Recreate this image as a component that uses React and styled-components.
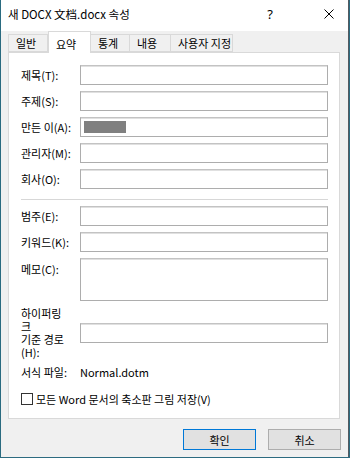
import React from "react"
import styled, { createGlobalStyle } from "styled-components"

const Global = createGlobalStyle`
  html, body {
    margin: 0;
    padding: 0;
    background: #2c6b80;
  }
  body {
    font-family: "Noto Sans CJK KR", "Noto Sans", sans-serif;
    font-size: 11px;
    color: #000;
  }
`

const Window = styled.div`
  box-sizing: border-box;
  width: 349px;
  height: 457px;
  background: #f0f0f0;
  border-left: 1px solid #2a6b80;
  border-right: 1px solid #555a60;
  display: flex;
  flex-direction: column;
`
const TitleBar = styled.div`
  height: 31px;
  flex: 0 0 31px;
  background: #fff;
  display: flex;
  align-items: center;
  padding-left: 7px;
  padding-bottom: 4px;
  box-sizing: border-box;
`
const Title = styled.div`
  flex: 1;
  font-size: 11.5px;
  white-space: nowrap;
`
const Help = styled.div`
  width: 20px;
  text-align: center;
  font-family: "Noto Sans", sans-serif;
  font-size: 13px;
  margin-right: 26px;
`
const Close = styled.div`
  width: 46px;
  display: flex;
  justify-content: center;
  align-items: center;
  margin-right: -4px;
`
const TabStrip = styled.div`
  display: flex;
  align-items: flex-end;
  height: 21px;
  padding-left: 7px;
  position: relative;
  z-index: 1;
`
const Tab = styled.div`
  box-sizing: border-box;
  width: ${p => p.w}px;
  height: ${p => (p.active ? 22 : 18)}px;
  margin-bottom: ${p => (p.active ? -1 : 0)}px;
  background: ${p => (p.active ? "#fff" : "#f0f0f0")};
  border: 1px solid #d9d9d9;
  border-bottom: ${p => (p.active ? "none" : "1px solid #d9d9d9")};
  border-left-width: ${p => (p.first || p.active ? 1 : 0)}px;
  padding-left: 7px;
  padding-top: ${p => (p.active ? 2 : 0)}px;
  display: flex;
  align-items: center;
  white-space: nowrap;
  font-size: 11px;
`
const Panel = styled.div`
  box-sizing: border-box;
  margin: 0 8px 0 7px;
  height: 367px;
  background: #fff;
  border: 1px solid #d9d9d9;
  padding: 12px 11px 0 12px;
  display: flex;
  flex-direction: column;
`
const Row = styled.div`
  display: flex;
  align-items: ${p => (p.top ? "flex-start" : "center")};
  margin-top: ${p => p.mt || 0}px;
  min-height: 20px;
`
const Label = styled.div`
  flex: 0 0 59px;
  white-space: nowrap;
  line-height: ${p => (p.multi ? "13px" : "normal")};
  padding-top: ${p => (p.top ? 3 : 0)}px;
`
const Field = styled.div`
  box-sizing: border-box;
  flex: 1;
  height: ${p => p.h || 20}px;
  background: #fff;
  border: 1px solid #adadad;
  border-top-color: #c3c3c3;
  box-shadow: inset 0 1px 0 #e0e0e0;
  display: flex;
  align-items: center;
  padding-left: 3px;
`
const Redacted = styled.span`
  display: block;
  width: 42px;
  height: 12px;
  background: #808080;
`
const Separator = styled.div`
  height: 1px;
  background: #d7d7d7;
  margin-top: 10px;
`
const Value = styled.div`
  font-size: 11px;
`
const Check = styled.span`
  box-sizing: border-box;
  width: 12px;
  height: 12px;
  border: 1px solid #333;
  background: #fff;
  margin-right: 3px;
  flex: 0 0 12px;
`
const Buttons = styled.div`
  display: flex;
  justify-content: flex-end;
  gap: 12px;
  padding: 10px 7px 0 0;
`
const Button = styled.div`
  box-sizing: border-box;
  width: 73px;
  height: 21px;
  background: #e1e1e1;
  border: 1px solid ${p => (p.primary ? "#0078d7" : "#adadad")};
  display: flex;
  align-items: center;
  justify-content: center;
  font-size: 11px;
`

const fields = [
  { label: "제목(T):" },
  { label: "주제(S):" },
  { label: "만든 이(A):", redacted: true },
  { label: "관리자(M):" },
  { label: "회사(O):" },
]

const tabs = [
  { name: "일반", w: 40, first: true },
  { name: "요약", w: 43, active: true },
  { name: "통계", w: 39 },
  { name: "내용", w: 41 },
  { name: "사용자 지정", w: 62 },
]

export default function App() {
  return (
    <>
      <Global />
      <Window>
        <TitleBar>
          <Title>새 DOCX 文档.docx 속성</Title>
          <Help>?</Help>
          <Close>
            <svg width="10" height="10" viewBox="0 0 10 10">
              <path d="M0.5 0.5 L9.5 9.5 M9.5 0.5 L0.5 9.5" stroke="#000" strokeWidth="1" />
            </svg>
          </Close>
        </TitleBar>
        <TabStrip>
          {tabs.map(t => (
            <Tab key={t.name} w={t.w} active={t.active} first={t.first}>
              {t.name}
            </Tab>
          ))}
        </TabStrip>
        <Panel>
          {fields.map((f, i) => (
            <Row key={f.label} mt={i ? 6 : 0}>
              <Label>{f.label}</Label>
              <Field>{f.redacted && <Redacted />}</Field>
            </Row>
          ))}
          <Separator />
          <Row mt={6}>
            <Label>범주(E):</Label>
            <Field />
          </Row>
          <Row mt={6}>
            <Label>키워드(K):</Label>
            <Field />
          </Row>
          <Row mt={6} top>
            <Label top>메모(C):</Label>
            <Field h={43} />
          </Row>
          <Row mt={6}>
            <Label multi>
              하이퍼링
              <br />크<br />
              기준 경로
              <br />
              (H):
            </Label>
            <Field />
          </Row>
          <Row mt={3}>
            <Label>서식 파일:</Label>
            <Value>Normal.dotm</Value>
          </Row>
          <Row mt={7}>
            <Check />
            <span>모든 Word 문서의 축소판 그림 저장(V)</span>
          </Row>
        </Panel>
        <Buttons>
          <Button primary>확인</Button>
          <Button>취소</Button>
        </Buttons>
      </Window>
    </>
  )
}
